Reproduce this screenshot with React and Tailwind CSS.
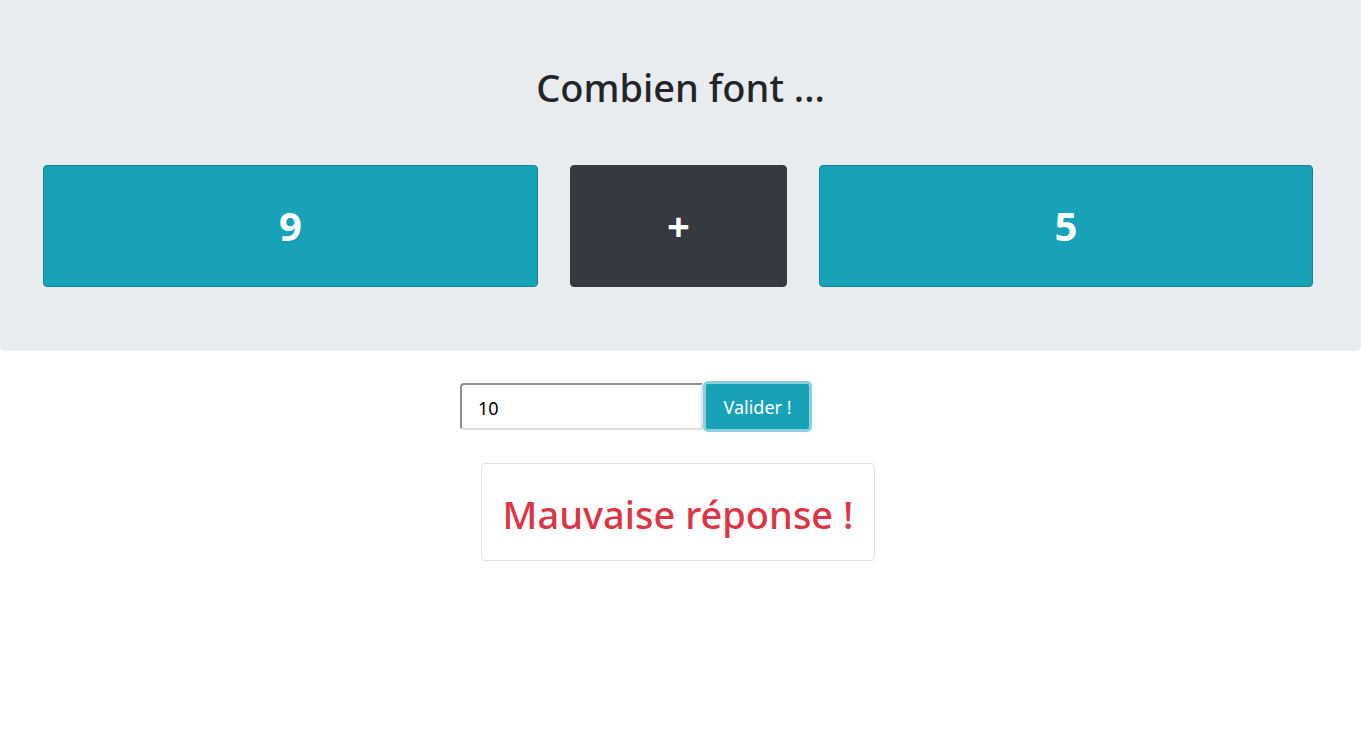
export default function App() {
  const font = { fontFamily: '"Segoe UI", "Noto Sans", sans-serif' }
  return (
    <div className="min-h-[741px] bg-white text-[#212529]" style={font}>
      <div className="rounded-b-[5px] bg-[#e9ecef] px-[43px] pt-[64px] pb-[64px]">
        <h1 className="text-center text-[38px] font-medium leading-[46px]">Combien font ...</h1>
        <div className="mt-[55px] flex gap-8">
          <div className="flex h-[122px] w-[495px] items-center justify-center rounded-[4px] border border-[#138496] bg-[#17a2b8] text-[40px] font-bold text-white">
            9
          </div>
          <div className="flex h-[122px] w-[217px] items-center justify-center rounded-[4px] border border-[#343a40] bg-[#343a40] text-[40px] font-bold text-white">
            +
          </div>
          <div className="flex h-[122px] w-[494px] items-center justify-center rounded-[4px] border border-[#138496] bg-[#17a2b8] text-[40px] font-bold text-white">
            5
          </div>
        </div>
      </div>

      <div className="mt-[30px] flex pl-[460px]">
        <div className="flex items-center">
          <input
            defaultValue="10"
            className="h-[47px] w-[243px] rounded-l-[4px] border-2 border-t-[#8f8f8f] border-l-[#8f8f8f] border-r-[#e0e0e0] border-b-[#e0e0e0] bg-white px-[16px] pt-[3px] text-[18px] text-black outline-none"
          />
          <button className="h-[51px] w-[109px] rounded-[5px] border-[3px] border-[#8bd0db] bg-[#17a2b8] pt-[2px] text-[18px] text-white">
            Valider !
          </button>
        </div>
      </div>

      <div className="mt-[31px] flex pl-[481px]">
        <div className="w-[394px] rounded-[4px] border border-[#dee2e6] pt-[24px] pb-[20px] text-center">
          <h1 className="text-[38px] font-medium leading-[52px] text-[#dc3545]">Mauvaise réponse !</h1>
        </div>
      </div>
    </div>
  )
}
